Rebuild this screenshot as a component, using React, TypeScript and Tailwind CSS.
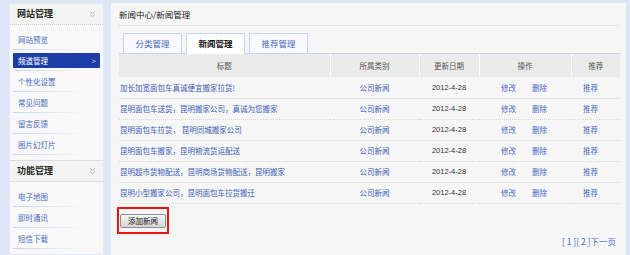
import React from 'react'

const font = { fontFamily: '"Noto Sans CJK SC", "Noto Sans", sans-serif' }

type Group = { title: string; items: string[]; active?: number }

const groups: Group[] = [
  { title: '网站管理', items: ['网站预览', '频道管理', '个性化设置', '常见问题', '留言反馈', '图片幻灯片'], active: 1 },
  { title: '功能管理', items: ['电子地图', '即时通讯', '短信下载', '在线设置'] },
]

const news = [
  '加长加宽面包车真诚便宜搬家拉货!',
  '昆明面包车送货，昆明搬家公司，真诚为您搬家',
  '昆明面包车拉货， 昆明同城搬家公司',
  '昆明面包车搬家，昆明物流货运配送',
  '昆明超市货物配送，昆明商场货物配送，昆明搬家',
  '昆明小型搬家公司，昆明面包车拉货搬迁',
]

function DoubleDown() {
  return (
    <svg width="7" height="8" viewBox="0 0 7 8" fill="none" stroke="#b5b5b5" strokeWidth="1">
      <path d="M1 1.5 L3.5 3.5 L6 1.5" />
      <path d="M1 4.5 L3.5 6.5 L6 4.5" />
    </svg>
  )
}

function Sidebar() {
  return (
    <div className="w-[95px] shrink-0 bg-[#f8f8f8] border border-[#e4e9f2] flex flex-col">
      {groups.map((g, gi) => (
        <div key={g.title} className={gi > 0 ? 'border-t border-[#dcdcdc]' : ''}>
          <div className="h-[21px] flex items-center justify-between pl-[7px] pr-[7px] border-b border-dotted border-[#cfcfcf] bg-[#f4f4f4]">
            <span className="text-[9px] font-bold text-[#222]">{g.title}</span>
            <DoubleDown />
          </div>
          <div className="pt-[4px] pb-[5px]">
            {g.items.map((it, i) => (
              <div key={it} className="h-[21px] flex flex-col">
                <div
                  className={`mt-[3px] h-[15px] mx-[3px] flex items-center justify-between pl-[5px] pr-[4px] text-[7.5px] ${
                    g.active === i ? 'bg-[#1b3fa6] text-white rounded-[1px]' : 'text-[#4a6cc0]'
                  }`}
                >
                  <span>{it}</span>
                  {g.active === i && <span className="text-[8px] text-[#c9d4f2]">&gt;</span>}
                </div>
                <div className="mt-auto mx-[3px] w-[72px] h-px bg-gradient-to-r from-[#c6d4f0] to-transparent" />
              </div>
            ))}
          </div>
        </div>
      ))}
    </div>
  )
}

const cols = [
  { name: '标题', w: 'w-[211px]' },
  { name: '所属类别', w: 'w-[89px]' },
  { name: '更新日期', w: 'w-[60px]' },
  { name: '操作', w: 'w-[92px]' },
  { name: '推荐', w: 'w-[49px]' },
]

function NewsTable() {
  return (
    <table className="w-[501px] border-collapse text-[7.5px] table-fixed">
      <thead>
        <tr className="h-[23px] bg-[#ebebeb] text-[#555]">
          {cols.map((c, i) => (
            <th key={c.name} className={`${c.w} font-normal text-center ${i > 0 ? 'border-l border-white' : ''}`}>
              {c.name}
            </th>
          ))}
        </tr>
      </thead>
      <tbody>
        {news.map((t, i) => (
          <tr key={i} className={`h-[21px] border-b ${i % 2 ? 'border-dotted border-[#d8d8d8]' : 'border-[#e6e6e6]'}`}>
            <td className="pl-[1px] text-[#3d5fb8] whitespace-nowrap">{t}</td>
            <td className="text-center text-[#3d5fb8]">公司新闻</td>
            <td className="text-center text-[#333]" style={{ fontFamily: '"Liberation Sans", sans-serif' }}>2012-4-28</td>
            <td className="text-center text-[#4a6cc0]">
              <span className="inline-flex gap-[16px] pr-[2px]">
                <span>修改</span>
                <span>删除</span>
              </span>
            </td>
            <td className="text-left pl-[12px] text-[#4a6cc0]">推荐</td>
          </tr>
        ))}
      </tbody>
    </table>
  )
}

function Main() {
  return (
    <div className="flex-1 mr-[4px] bg-[#f6f6f6] border-l border-[#dfe4ee] flex flex-col">
      <div className="h-[22px] flex items-center pl-[8px] pt-[1px] text-[8.5px] text-[#222]">新闻中心/新闻管理</div>
      <div className="mx-[8px] border-t border-dotted border-[#d2d2d2]" />
      <div className="mt-[6px] ml-[8px] w-[502px] flex items-end gap-[4px] pl-[4px] border-b border-[#c6d4f0] h-[22px]">
        {['分类管理', '新闻管理', '推荐管理'].map((t, i) => (
          <div
            key={t}
            className={`w-[59px] h-[21px] -mb-px flex items-center justify-center text-[8.5px] border border-[#c6d4f0] ${
              i === 1 ? 'bg-white border-b-white font-bold text-[#111]' : 'bg-[#f7f9fd] text-[#4a6cc0]'
            }`}
          >
            {t}
          </div>
        ))}
      </div>
      <div className="ml-[8px]">
        <NewsTable />
      </div>
      <div className="ml-[6px] mt-[3px] self-start border-2 border-[#ee1111] px-[1px] pt-[5px] pb-[4px]">
        <button className="w-[46px] h-[14px] rounded-[2px] border border-[#8f8f8f] bg-gradient-to-b from-[#f6f6f6] to-[#d6d6d6] text-[7.5px] text-[#111] flex items-center justify-center">
          添加新闻
        </button>
      </div>
      <div className="self-end mr-[10px] mt-[1px] text-[8.5px] text-[#4a6cc0] whitespace-pre">[ 1 ][ 2 ]下一页</div>
    </div>
  )
}

export default function App() {
  return (
    <div style={font} className="w-[630px] h-[255px] overflow-hidden bg-[#dde6f5] flex gap-[6px] pt-[3px] pl-[9px]">
      <Sidebar />
      <Main />
    </div>
  )
}
